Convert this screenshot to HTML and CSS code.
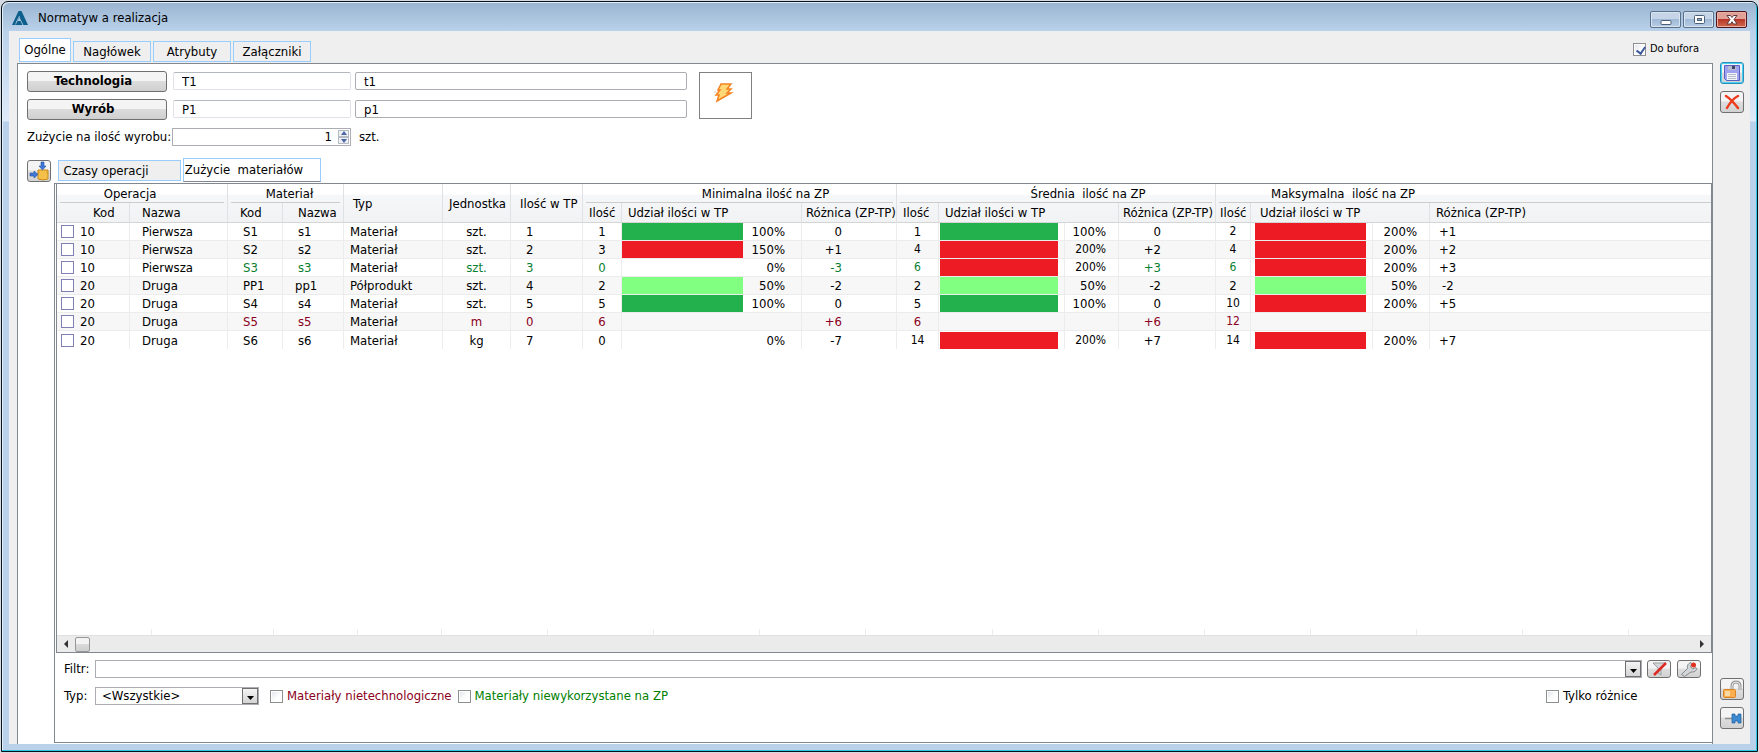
FILE: index.html
```html
<!DOCTYPE html>
<html lang="pl">
<head>
<meta charset="utf-8">
<title>Normatyw a realizacja</title>
<link rel="stylesheet" href="styles.css">
</head>
<body>
<div class="window">
  <header class="titlebar">
    <svg class="logo" width="16" height="16" viewBox="0 0 16 16" aria-hidden="true"><path d="M6.500 1h3L16 15h-5L7.500 7 5.500 11H9l1.500 4H0z" fill="#0d5f8c"/><path d="M7.500 6L4.500 12M3.500 14.500L5 11" stroke="#8fb4d2" stroke-width="1"/><path d="M9 11l2 4" stroke="#8fb4d2"/></svg>
    <h1 class="caption">Normatyw a realizacja</h1>
    <div class="win-buttons">
      <button class="win-btn" type="button" aria-label="Minimalizuj"><svg width="14" height="14" viewBox="0 0 14 14"><rect x="2" y="7.500" width="10" height="4" rx="1" fill="#fff" stroke="#4c5f75"/></svg></button>
      <button class="win-btn" type="button" aria-label="Maksymalizuj"><svg width="14" height="14" viewBox="0 0 14 14"><rect x="2.500" y="2.500" width="10" height="8" rx="1" fill="#fff" stroke="#4c5f75"/><rect x="5.500" y="5.500" width="4" height="2" fill="#8fa9c6" stroke="#4c5f75"/></svg></button>
      <button class="win-btn win-close" type="button" aria-label="Zamknij"><svg width="14" height="14" viewBox="0 0 14 14"><path d="M2 2.500h3.500L7 4.500l1.500-2H12L9 6.500l3 4.500H8.500L7 8.700 5.500 11H2l3-4.500z" fill="#fff" stroke="#5e3a3f"/></svg></button>
    </div>
  </header>

  <div class="client">
    <div class="left">
      <div class="tabbar">
        <nav class="tabs" role="tablist">
          <button class="tab tab-on tab-first" type="button" role="tab" aria-selected="true">Ogólne</button>
          <button class="tab" type="button" role="tab">Nagłówek</button>
          <button class="tab" type="button" role="tab">Atrybuty</button>
          <button class="tab" type="button" role="tab">Załączniki</button>
        </nav>
        <label class="check buffer"><input type="checkbox" class="box" checked>Do bufora</label>
      </div>

      <main class="pane">
        <div class="form">
          <div class="fields">
            <div class="field-row">
              <button class="push" type="button">Technologia</button>
              <input class="text code" type="text" value="T1" aria-label="Kod technologii">
              <input class="text name" type="text" value="t1" aria-label="Nazwa technologii">
            </div>
            <div class="field-row">
              <button class="push" type="button">Wyrób</button>
              <input class="text code" type="text" value="P1" aria-label="Kod wyrobu">
              <input class="text name" type="text" value="p1" aria-label="Nazwa wyrobu">
            </div>
            <div class="field-row">
              <label class="qty-label" for="qty">Zużycie na ilość wyrobu:</label>
              <span class="spin"><input id="qty" class="qty" type="text" inputmode="numeric" value="1"><span class="arrows"><button type="button" aria-label="Więcej"><svg width="8" height="5" viewBox="0 0 8 5"><path d="M4 0l3 4H1z" fill="#4a64a8"/></svg></button><button type="button" aria-label="Mniej"><svg width="8" height="5" viewBox="0 0 8 5"><path d="M4 5l3-4H1z" fill="#4a64a8"/></svg></button></span></span>
              <span class="unit">szt.</span>
            </div>
          </div>
          <button class="flash" type="button" aria-label="Przelicz"><svg width="22" height="20" viewBox="0 0 22 20"><path d="M8 1h10l-4 5h4l-4 4h4L4 18l2-6H3l4-5H5z" fill="#ffd978" stroke="#f58220" stroke-width="1.500"/><path d="M18 1l2-1M1 9h2" stroke="#c8c8c8"/></svg></button>
        </div>

        <div class="subbar">
          <button class="icon-btn" type="button" aria-label="Pobierz"><svg width="22" height="20" viewBox="0 0 22 20"><path d="M10 9h10v9q-5 2-10 0z" fill="#f5c04a" stroke="#c98a1b"/><path d="M10 9q2 2 0 4M20 9q-2 2 0 4" fill="#ffe08a" stroke="#c98a1b"/><path d="M13 1h3v4h2l-3.500 4L11 5h2z" fill="#3f78d8" stroke="#2450a0" stroke-width=".6"/><path d="M2 12h4v-2l4 3.500L6 17v-2H2z" fill="#3f78d8" stroke="#2450a0" stroke-width=".6"/></svg></button>
          <nav class="tabs" role="tablist">
            <button class="tab sub" type="button" role="tab">Czasy operacji</button>
            <button class="tab sub sub-on tab-on" type="button" role="tab" aria-selected="true">Zużycie&nbsp; materiałów</button>
          </nav>
        </div>

        <section class="page">
          <div class="grid">
            <table>
              <colgroup><col class="w73"><col class="w98"><col class="w55"><col class="w61"><col class="w99"><col class="w68"><col class="w72"><col class="w39"><col class="w180"><col class="w95"><col class="w42"><col class="w126"><col class="w54"><col class="w97"><col class="w35"><col class="w122"><col class="w57"><col></colgroup>
              <thead>
                <tr class="h1">
                  <th colspan="2" scope="colgroup"><div class="group g-op">Operacja</div></th>
                  <th colspan="2" scope="colgroup"><div class="group g-mat">Materiał</div></th>
                  <th rowspan="2" scope="col" class="p9">Typ</th>
                  <th rowspan="2" scope="col" class="p5">Jednostka</th>
                  <th rowspan="2" scope="col" class="p9">Ilość w TP</th>
                  <th colspan="3" scope="colgroup"><div class="group g-min">Minimalna ilość na ZP</div></th>
                  <th colspan="4" scope="colgroup"><div class="group g-avg">Średnia&nbsp; ilość na ZP</div></th>
                  <th colspan="4" scope="colgroup" class="last"><div class="group g-max">Maksymalna&nbsp; ilość na ZP</div></th>
                </tr>
                <tr class="h2">
                  <th scope="col" class="p36">Kod</th><th scope="col" class="p11">Nazwa</th>
                  <th scope="col" class="p11">Kod</th><th scope="col" class="p14">Nazwa</th>
                  <th scope="col" class="p5">Ilość</th><th scope="col" class="p5">Udział ilości w TP</th><th scope="col" class="p2">Różnica (ZP-TP)</th>
                  <th scope="col" class="p5">Ilość</th><th scope="col" colspan="2" class="p5">Udział ilości w TP</th><th scope="col" class="p2">Różnica (ZP-TP)</th>
                  <th scope="col" class="p2">Ilość</th><th scope="col" colspan="2" class="p9">Udział ilości w TP</th><th scope="col" class="p5 last">Różnica (ZP-TP)</th>
                </tr>
              </thead>
              <tbody>
                <tr><td><label class="pick"><input type="checkbox" class="row-box">10</label></td><td class="p11">Pierwsza</td><td class="p14">S1</td><td class="p14">s1</td><td class="p5">Materiał</td><td class="mid">szt.</td><td class="p14">1</td><td class="mid">1</td><td><div class="share"><i class="bar full"></i>100%</div></td><td class="diff">0</td><td class="mid">1</td><td><i class="bar avg full"></i></td><td class="pct">100%</td><td class="diff">0</td><td class="mid small">2</td><td><i class="bar max over"></i></td><td class="pct">200%</td><td class="p9 last">+1</td></tr>
                <tr><td><label class="pick"><input type="checkbox" class="row-box">10</label></td><td class="p11">Pierwsza</td><td class="p14">S2</td><td class="p14">s2</td><td class="p5">Materiał</td><td class="mid">szt.</td><td class="p14">2</td><td class="mid">3</td><td><div class="share"><i class="bar over"></i>150%</div></td><td class="diff">+1</td><td class="mid small">4</td><td><i class="bar avg over"></i></td><td class="pct small">200%</td><td class="diff">+2</td><td class="mid small">4</td><td><i class="bar max over"></i></td><td class="pct">200%</td><td class="p9 last">+2</td></tr>
                <tr><td><label class="pick"><input type="checkbox" class="row-box">10</label></td><td class="p11">Pierwsza</td><td class="p14 green">S3</td><td class="p14 green">s3</td><td class="p5">Materiał</td><td class="mid green">szt.</td><td class="p14 green">3</td><td class="mid green">0</td><td><div class="share"><i class="bar none"></i>0%</div></td><td class="diff green">-3</td><td class="mid small green">6</td><td><i class="bar avg over"></i></td><td class="pct small">200%</td><td class="diff green">+3</td><td class="mid small green">6</td><td><i class="bar max over"></i></td><td class="pct">200%</td><td class="p9 last">+3</td></tr>
                <tr><td><label class="pick"><input type="checkbox" class="row-box">20</label></td><td class="p11">Druga</td><td class="p14">PP1</td><td class="p11">pp1</td><td class="p5">Półprodukt</td><td class="mid">szt.</td><td class="p14">4</td><td class="mid">2</td><td><div class="share"><i class="bar half"></i>50%</div></td><td class="diff">-2</td><td class="mid">2</td><td><i class="bar avg half"></i></td><td class="pct">50%</td><td class="diff">-2</td><td class="mid">2</td><td><i class="bar max half"></i></td><td class="pct">50%</td><td class="p11 last">-2</td></tr>
                <tr><td><label class="pick"><input type="checkbox" class="row-box">20</label></td><td class="p11">Druga</td><td class="p14">S4</td><td class="p14">s4</td><td class="p5">Materiał</td><td class="mid">szt.</td><td class="p14">5</td><td class="mid">5</td><td><div class="share"><i class="bar full"></i>100%</div></td><td class="diff">0</td><td class="mid">5</td><td><i class="bar avg full"></i></td><td class="pct">100%</td><td class="diff">0</td><td class="mid small">10</td><td><i class="bar max over"></i></td><td class="pct">200%</td><td class="p9 last">+5</td></tr>
                <tr><td><label class="pick"><input type="checkbox" class="row-box">20</label></td><td class="p11">Druga</td><td class="p14 red">S5</td><td class="p14 red">s5</td><td class="p5">Materiał</td><td class="mid red">m</td><td class="p14 red">0</td><td class="mid red">6</td><td></td><td class="diff red">+6</td><td class="mid red">6</td><td></td><td></td><td class="diff red">+6</td><td class="mid small red">12</td><td></td><td></td><td class="last"></td></tr>
                <tr><td><label class="pick"><input type="checkbox" class="row-box">20</label></td><td class="p11">Druga</td><td class="p14">S6</td><td class="p14">s6</td><td class="p5">Materiał</td><td class="mid">kg</td><td class="p14">7</td><td class="mid">0</td><td><div class="share"><i class="bar none"></i>0%</div></td><td class="diff">-7</td><td class="mid small">14</td><td><i class="bar avg over"></i></td><td class="pct small">200%</td><td class="diff">+7</td><td class="mid small">14</td><td><i class="bar max over"></i></td><td class="pct">200%</td><td class="p9 last">+7</td></tr>
              </tbody>
            </table>
            <div class="stubs"></div>
            <div class="scroll">
              <button type="button" aria-label="Przewiń w lewo"><svg width="6" height="8" viewBox="0 0 6 8"><path d="M5 0v8L1 4z" fill="#333"/></svg></button>
              <span class="thumb"></span>
              <button class="to-end" type="button" aria-label="Przewiń w prawo"><svg width="6" height="8" viewBox="0 0 6 8"><path d="M1 0v8l4-4z" fill="#333"/></svg></button>
            </div>
          </div>

          <div class="filter-row">
            <label class="filter-label" for="filter">Filtr:</label>
            <span class="combo wide"><input id="filter" type="text"><button class="drop" type="button" aria-label="Rozwiń"><svg width="7" height="4" viewBox="0 0 7 4"><path d="M0 0h7L3.500 4z"/></svg></button></span>
            <button class="icon-btn small-btn" type="button" aria-label="Wyczyść filtr"><svg width="20" height="16" viewBox="0 0 20 16"><path d="M4 2h13l-5 5v7l-3-2V7z" fill="#d4d7da" stroke="#9a9ea2"/><path d="M5 14L17 2" stroke="#de2a22" stroke-width="2.500"/></svg></button>
            <button class="icon-btn small-btn" type="button" aria-label="Konstruktor filtra"><svg width="20" height="16" viewBox="0 0 20 16"><path d="M2.500 13.500l6-6Q7.500 3 12 1.500l1 1-1.500 3 2 2.500 3.500-1.500 1 1q-1.500 4-6 3.500l-6.500 4.500z" fill="#d3d6d9" stroke="#85898d"/><circle cx="14.500" cy="4" r="2.500" fill="#e0301e"/></svg></button>
          </div>
          <div class="filter-row type-row">
            <label class="filter-label" for="type">Typ:</label>
            <span class="combo"><select id="type"><option>&lt;Wszystkie&gt;</option></select><span class="drop" aria-hidden="true"><svg width="7" height="4" viewBox="0 0 7 4"><path d="M0 0h7L3.500 4z"/></svg></span></span>
            <label class="check red"><input type="checkbox" class="box">Materiały nietechnologiczne</label>
            <label class="check green2"><input type="checkbox" class="box">Materiały niewykorzystane na ZP</label>
            <label class="check diff-only"><input type="checkbox" class="box">Tylko różnice</label>
          </div>
        </section>
      </main>
    </div>

    <aside class="side">
      <button class="icon-btn hot" type="button" aria-label="Zapisz"><svg width="18" height="18" viewBox="0 0 18 18"><path d="M1.500 1.500h15v15h-13l-2-2z" fill="#9fa2ee" stroke="#5b5fc0"/><path d="M5 2h8v4H5z" fill="#b9bcd0"/><path d="M9 2h3v3H9z" fill="#3d4268"/><path d="M4 9h10v7H4z" fill="#f4f5fb"/><path d="M5 10.500h8M5 12.500h8M5 14.500h8" stroke="#b8bcc8"/></svg></button>
      <button class="icon-btn" type="button" aria-label="Anuluj"><svg width="18" height="18" viewBox="0 0 18 18"><path d="M3 3q5 3 12 12M15 3Q9 6 4 15" fill="none" stroke="#ee3d1c" stroke-width="2.500" stroke-linecap="round"/></svg></button>
      <button class="icon-btn lower" type="button" aria-label="Odblokuj"><svg width="20" height="18" viewBox="0 0 20 18"><path d="M10 9V6q0-4 4-4t4 4v4" fill="none" stroke="#9b9b9b" stroke-width="3"/><path d="M10 9V6q0-4 4-4t4 4v4" fill="none" stroke="#e6e6e6"/><rect x="1.500" y="9.500" width="12" height="8" rx="1" fill="#fbae4e" stroke="#d98324"/><path d="M3 11h5v5H3z" fill="#fdd9a2"/></svg></button>
      <button class="icon-btn" type="button" aria-label="Przypnij"><svg width="20" height="18" viewBox="0 0 20 18"><path d="M3 9.500h8" stroke="#8b8f93" stroke-width="1.500"/><path d="M10 5h3v2h3V5h3v9h-3v-2h-3v2h-3z" fill="#3b8ad2" stroke="#1d5c9d" stroke-width=".7"/></svg></button>
    </aside>
  </div>
</div>
</body>
</html>
```

FILE: styles.css
```css
* { box-sizing: border-box; }

body {
  margin: 0;
  height: 100vh;
  padding: 1px;
  background: #d5dbe3;
  color: #000;
  font: 13px/16px "DejaVu Sans Condensed", "Noto Sans", sans-serif;
}

button, input, select { font: inherit; color: inherit; margin: 0; padding: 0; }
svg { display: block; }

/* Window frame */
.window {
  display: flex;
  flex-direction: column;
  height: 100%;
  border: 1px solid #0b1118;
  border-radius: 7px 7px 0 0;
  overflow: hidden;
  padding: 0 7px 7px;
  background: linear-gradient(#9ab4d1 0, #b9d1ea 29px, #dfeafa 119px, #b9d1ea 120px);
  box-shadow: inset -1px -1px #2cc6e0, inset 1px 1px #e4eef8;
}
.titlebar {
  display: flex;
  align-items: center;
  flex: none;
  height: 29px;
  margin: 0 -7px;
  padding: 2px 10px 0 10px;
}
.caption { margin: 0 0 0 10px; font: inherit; }
.win-buttons { display: flex; gap: 2px; margin-left: auto; padding-top: 4px; }
.win-btn {
  display: grid;
  place-items: center;
  width: 31px;
  height: 17px;
  border: 1px solid #5a6f88;
  border-radius: 2px;
  background: linear-gradient(#c5d5e7 0 45%, #9fb9d6 50%, #b7cde5);
  box-shadow: inset 0 0 0 1px #d7e4f1;
}
.win-close {
  border-color: #52161e;
  background: linear-gradient(#e2a196 0 45%, #b8372a 50%, #d0694a);
  box-shadow: inset 0 0 0 1px #e6b0a4;
}

/* Client area */
.client { display: flex; flex: 1; min-height: 0; background: #efefef; }
.left { display: flex; flex-direction: column; flex: 1; min-width: 0; padding-left: 8px; }
.tabbar { display: flex; align-items: flex-end; height: 32px; }
.tabs { display: flex; align-items: flex-end; gap: 2px; padding-left: 2px; }
.tab {
  width: 78px;
  height: 21px;
  margin-bottom: 1px;
  border: 1px solid #99ccff;
  background: #efefef;
  white-space: nowrap;
}
.tab-on { background: #fff; }
.tab-first { width: 52px; height: 24px; }
.check { display: flex; align-items: center; gap: 4px; }
.buffer { margin: 0 14px 6px auto; font-size: 11px; }
.box, .row-box {
  appearance: none;
  flex: none;
  width: 13px;
  height: 13px;
  margin: 0;
  border: 1px solid #8e8f8f;
  background: linear-gradient(135deg, #dfe3ea, #fff 60%);
  box-shadow: inset 0 0 0 1px #fff;
}
.box:checked { position: relative; }
.box:checked::after {
  content: "";
  position: absolute;
  left: 4px;
  top: 1px;
  width: 4px;
  height: 7px;
  border: solid #3f5a9c;
  border-width: 0 2px 2px 0;
  transform: rotate(35deg);
}
.row-box { border-color: #8080b4; background: #fff; }

.pane {
  display: flex;
  flex-direction: column;
  flex: 1;
  min-height: 0;
  border: 1px solid #828790;
  border-bottom: 0;
  background: #fff;
}
.form { display: flex; align-items: flex-start; gap: 12px; padding: 6px 9px 0; }
.fields { display: grid; gap: 6px; }
.field-row { display: flex; align-items: center; height: 22px; }
.push {
  width: 140px;
  height: 21px;
  margin-right: 6px;
  padding-right: 8px;
  border: 1px solid #707070;
  border-radius: 3px;
  background: linear-gradient(#f4f4f4 0 45%, #dcdcdc 50%, #cfcfcf);
  font-weight: bold;
}
.text { height: 18px; border: 1px solid #abadb3; border-radius: 2px; background: #fff; padding: 0 8px; }
.code { width: 178px; margin-right: 4px; border-color: #b4b8bf #dfe2e8 #dfe2e8; }
.name { width: 332px; }
.qty-label { width: 145px; }
.spin { display: flex; width: 179px; height: 18px; padding: 1px; border: 1px solid #abadb3; }
.qty { flex: 1; min-width: 0; border: 0; padding-right: 6px; text-align: right; }
.arrows { display: grid; width: 11px; }
.arrows button { display: grid; place-items: center; border: 1px solid #b5bac4; background: #eef0f4; overflow: hidden; }
.unit { margin-left: 8px; }
.flash { display: grid; place-items: center; width: 53px; height: 47px; margin-top: 2px; border: 1px solid #808080; background: #fff; padding-right: 3px; padding-bottom: 5px; }

.subbar { display: flex; align-items: flex-end; gap: 5px; height: 35px; padding: 8px 9px 1px; }
.sub { width: 123px; padding-right: 27px; }
.sub-on { width: 138px; height: 24px; margin: 0; padding: 0 16px 0 0; border-bottom-color: #828790; }

.icon-btn {
  display: grid;
  place-items: center;
  width: 24px;
  height: 22px;
  border: 1px solid #707070;
  border-radius: 3px;
  background: linear-gradient(#f4f4f4 0 45%, #dedede 50%, #d2d2d2);
  overflow: hidden;
}
.hot { border-color: #2a90b8; box-shadow: inset 0 0 0 1px #49d0f5; }

/* Inner page with grid and filters */
.page {
  display: flex;
  flex-direction: column;
  flex: 1;
  min-height: 0;
  margin: 0 0 1px 36px;
  border: 1px solid #828790;
  border-right: 0;
}
.grid {
  display: flex;
  flex-direction: column;
  flex: 1;
  margin: 0 0 0 1px;
  border: 1px solid #828790;
  border-top: 0;
}
table { width: 100%; table-layout: fixed; border-collapse: separate; border-spacing: 0; }
th, td { padding: 0; border-right: 1px solid #ececec; white-space: nowrap; text-align: left; font-weight: normal; }
thead { background: linear-gradient(#fff 0 25%, #f6f7f9 30%, #f1f2f4); }
th { border-right-color: #dfe1e4; line-height: 17px; }
.h1 { height: 19px; }
.h2 { height: 20px; }
.h2 th, th[rowspan] { border-bottom: 1px solid #d5d5d5; }
.last { border-right: 0; }
.group { height: 19px; margin: 0 3px; padding-top: 1px; border-bottom: 1px solid #ccc; text-align: center; }
.g-op { padding-right: 24px; }
.g-mat { padding-left: 8px; }
.g-min { padding-left: 52px; }
.g-avg { padding-left: 64px; }
.g-max { padding-left: 52px; margin-right: 0; text-align: left; }
td { height: 18px; border-bottom: 1px solid #ececec; line-height: 17px; }
tbody tr:nth-child(even) { background: #f7f7f7; }
tbody tr:last-child td { border-bottom: 0; }

.w73 { width: 73px; } .w98 { width: 98px; } .w55 { width: 55px; } .w61 { width: 61px; }
.w99 { width: 99px; } .w68 { width: 68px; } .w72 { width: 72px; } .w39 { width: 39px; }
.w180 { width: 180px; } .w95 { width: 95px; } .w42 { width: 42px; } .w126 { width: 126px; }
.w54 { width: 54px; } .w97 { width: 97px; } .w35 { width: 35px; } .w122 { width: 122px; }
.w57 { width: 57px; }
.p2 { padding-left: 4px; }
.p5 { padding-left: 6px; }
.p9 { padding-left: 9px; }
.p11 { padding-left: 12px; }
.p14 { padding-left: 15px; }
.p36 { padding-left: 36px; }
.mid { text-align: center; }
.diff { padding-right: 54px; text-align: right; }
.pct { padding-right: 12px; text-align: right; }
.small { font-size: 12px; }
.pick { display: flex; align-items: center; gap: 6px; padding-left: 4px; }
.share { display: flex; justify-content: space-between; padding-right: 16px; }
.bar { display: block; width: 121px; height: 17px; }
.avg { width: 118px; margin-left: 1px; }
.max { width: 111px; margin-left: 4px; }
.full { background: #22b14c; }
.over { background: #ed1c24; }
.half { background: #80ff80; }
.green { color: #0a7f32; }
.green2 { color: #008000; }
.red { color: #8b0020; }

.stubs {
  height: 6px;
  margin-top: auto;
  margin-left: 94px;
  background:
    linear-gradient(#ececec, #ececec) 0 0 / 1px 6px no-repeat,
    linear-gradient(#ececec, #ececec) 122px 0 / 1px 6px no-repeat,
    linear-gradient(#ececec, #ececec) 206px 0 / 1px 6px no-repeat,
    linear-gradient(90deg, #ececec 1px, #fff 1px) 290px 0 / 106px 6px no-repeat,
    linear-gradient(90deg, #ececec 1px, #fff 1px) 396px 0 / 106px 6px no-repeat,
    linear-gradient(90deg, #ececec 1px, #fff 1px) 502px 0 / 106px 6px no-repeat,
    linear-gradient(90deg, #ececec 1px, #fff 1px) 608px 0 / 106px 6px no-repeat,
    linear-gradient(90deg, #ececec 1px, #fff 1px) 714px 0 / 127px 6px no-repeat,
    repeating-linear-gradient(90deg, #ececec 0 1px, #fff 1px 106px) 841px 0 no-repeat;
}
.scroll { display: flex; align-items: center; height: 17px; border-top: 1px solid #e0e0e0; background: #ebebeb; }
.scroll button { display: grid; place-items: center; width: 18px; height: 16px; border: 0; background: none; }
.thumb { width: 15px; height: 15px; border: 1px solid #979797; border-radius: 2px; background: linear-gradient(#f3f3f3 0 45%, #dadada 50%, #cfcfcf); }
.scroll .to-end { margin-left: auto; }

.filter-row { display: flex; align-items: center; height: 18px; margin: 7px 11px 0 9px; }
.type-row { height: 18px; margin: 9px 11px 37px 9px; }
.filter-label { width: 31px; }
.combo { position: relative; display: flex; width: 164px; height: 18px; margin-right: 11px; border: 1px solid #abadb3; background: #fff; }
.combo input, .combo select { flex: 1; min-width: 0; border: 0; background: none; appearance: none; padding-left: 6px; }
.wide { flex: 1; width: auto; margin-right: 5px; }
.drop { display: grid; place-items: center; width: 16px; height: 16px; padding-top: 3px; border: 1px solid #707070; background: linear-gradient(#f4f4f4, #d4d4d4); }
.combo span.drop { position: absolute; right: 0; top: 0; pointer-events: none; }
.small-btn { height: 18px; margin-right: 6px; }
.small-btn:last-child { margin-right: 0; }
.type-row .check { margin-right: 6px; }
.type-row .diff-only { width: 155px; margin-left: auto; margin-right: 0; }

.side { display: flex; flex-direction: column; gap: 7px; width: 37px; padding: 31px 6px 15px 7px; }
.lower { margin-top: auto; }
```
